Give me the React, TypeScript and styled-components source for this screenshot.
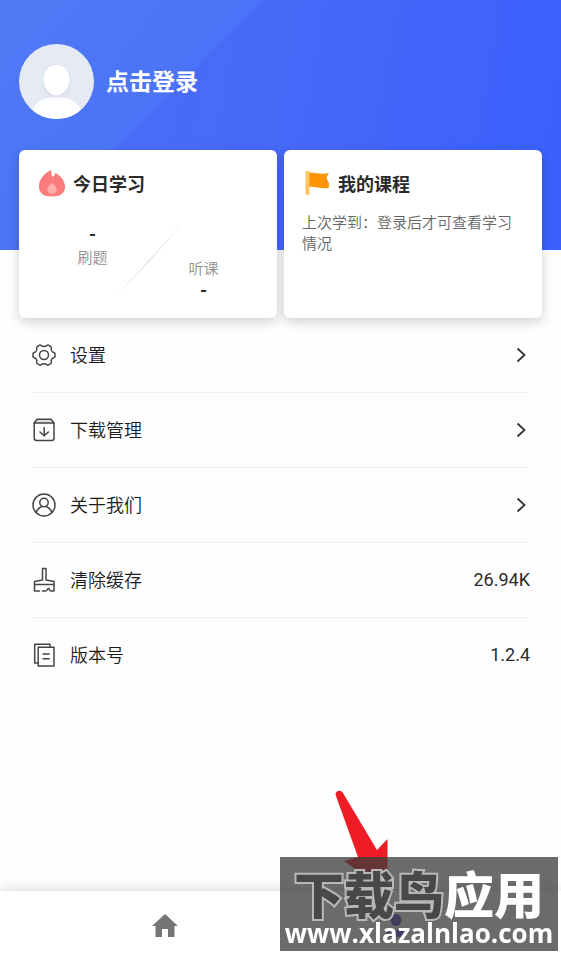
import React from "react";
import styled, { createGlobalStyle } from "styled-components";

const GlobalStyle = createGlobalStyle`
  * { box-sizing: border-box; }
  body {
    margin: 0;
    background: #fefefe;
    color: #2b2b2b;
    font-family: Roboto, "Noto Sans CJK SC", sans-serif;
  }
  button { font: inherit; color: inherit; background: none; border: 0; padding: 0; cursor: pointer; }
`;

const Page = styled.div`
  min-height: 100vh;
  display: flex;
  flex-direction: column;
`;

const Hero = styled.header`
  padding: 44px 19px 131px;
  background:
    linear-gradient(135deg, rgba(80, 124, 244, 0.85) 0, rgba(76, 118, 247, 0.75) 185px, transparent 187px),
    linear-gradient(100deg, #4c70f6 0%, #476af8 45%, #3e62fb 85%, #3a5ffd 100%);
`;

const LoginButton = styled.button`
  display: flex;
  align-items: center;
  gap: 12px;
`;

const LoginText = styled.span`
  padding-top: 2px;
  font-size: 23px;
  line-height: 32px;
  font-weight: 700;
  color: #fff;
`;

const Cards = styled.section`
  display: grid;
  grid-template-columns: 1fr 1fr;
  gap: 7px;
  margin-top: -100px;
  padding: 0 19px;
`;

const Card = styled.article`
  padding: 19px 18px 17px;
  border-radius: 6px;
  background: #fff;
  box-shadow: 0 4px 12px rgba(0, 0, 0, 0.18);
`;

const CardHead = styled.div`
  display: flex;
  align-items: center;
  gap: 8px;
`;

const CardTitle = styled.h2`
  margin: 0;
  padding-top: 2px;
  font-size: 18px;
  line-height: 28px;
  font-weight: 700;
`;

const CardText = styled.p`
  margin: 14px 0 0;
  font-size: 15px;
  line-height: 21px;
  font-weight: 350;
  color: #666;
`;

const Stats = styled.div`
  position: relative;
  display: grid;
  grid-template-columns: 1fr 1fr;
  margin-top: 25px;
`;

const Stat = styled.div<{ $low?: boolean }>`
  display: flex;
  flex-direction: ${(p) => (p.$low ? "column-reverse" : "column")};
  align-items: center;
  gap: ${(p) => (p.$low ? 0 : 3)}px;
  padding-top: ${(p) => (p.$low ? 35 : 0)}px;
  justify-content: flex-end;
  align-self: start;
`;

const StatValue = styled.strong`
  font-size: 18px;
  line-height: 21px;
`;

const StatLabel = styled.span`
  font-size: 15px;
  line-height: 21px;
  font-weight: 350;
  color: #909090;
`;

const Slash = styled.svg`
  position: absolute;
  left: 50%;
  top: 0;
  transform: translateX(-50%);
`;

const Menu = styled.nav`
  flex: 1;
  padding: 0 31px 0 30px;
`;

const MenuRow = styled.button`
  display: flex;
  align-items: center;
  width: 100%;
  height: 75px;
  border-bottom: 1px solid #efefef;
  font-size: 18px;
  text-align: left;
  &:last-child { border-bottom-color: transparent; }
`;

const RowLabel = styled.span`
  flex: 1;
  margin-left: 12px;
  padding-top: 2px;
  line-height: 26px;
  font-weight: 350;
  color: #1c1c1c;
`;

const RowValue = styled.span`
  line-height: 26px;
`;

const TabBar = styled.nav`
  position: sticky;
  bottom: 0;
  display: grid;
  grid-template-columns: 1fr 1fr;
  height: 65px;
  padding: 5px 49px 0;
  background: #fff;
  box-shadow: 0 -2px 12px rgba(0, 0, 0, 0.14);
`;

const Tab = styled.button`
  display: flex;
  align-items: center;
  justify-content: center;
`;

const Pointer = styled.svg`
  position: fixed;
  right: 171px;
  bottom: 55px;
  pointer-events: none;
`;

const Watermark = styled.aside`
  position: fixed;
  right: 3px;
  bottom: 5px;
  width: 278px;
  height: 94px;
  display: flex;
  flex-direction: column;
  align-items: center;
  padding-top: 8px;
  background: rgba(60, 60, 60, 0.76);
  pointer-events: none;
`;

const MarkName = styled.div`
  font-family: "Noto Sans CJK SC", sans-serif;
  font-size: 50px;
  line-height: 54px;
  font-weight: 900;
  color: #fff;
  white-space: nowrap;
`;

const MarkDark = styled.span`
  color: #484848;
  -webkit-text-stroke: 4px #b8b8b8;
  paint-order: stroke fill;
`;

const MarkUrl = styled.div`
  font-family: "Open Sans", sans-serif;
  font-size: 26px;
  line-height: 28px;
  font-weight: 700;
  color: #fff;
`;

const Avatar = () => (
  <svg width="75" height="75" viewBox="0 0 75 75" aria-hidden="true">
    <defs>
      <clipPath id="face"><circle cx="37.5" cy="37.5" r="37.5" /></clipPath>
      <filter id="soft" x="-30%" y="-30%" width="160%" height="160%">
        <feDropShadow dx="0" dy="2" stdDeviation="2.5" floodColor="#b9c8e6" floodOpacity="0.5" />
      </filter>
    </defs>
    <g clipPath="url(#face)">
      <rect width="75" height="75" fill="#e6ebf3" />
      <path d="M13 66C18 56 27 53 37.500 53S57 56 62 66V76H13Z" fill="#fff" />
      <path d="M37.500 21C45 21 50.500 27 50.500 35.500C50.500 44 44 51.500 37.500 51.500S24.500 44 24.500 35.500C24.500 27 30 21 37.500 21Z" fill="#fff" filter="url(#soft)" />
    </g>
  </svg>
);

const Flame = () => (
  <svg width="28" height="28" viewBox="0 0 28 28" aria-hidden="true">
    <path d="M14.500 0C14.200 3 14.300 5 15.500 7C17 6.300 17.800 4.800 18.200 3C24 5.500 28 11 28 17C28 23.500 23 26.500 15 26.500S2 23.500 2 16.500C2 8.500 8 2.500 14.500 0Z" fill="#fc7b7d" />
    <path d="M15 13C18 15.500 19.800 17.500 19.800 19.500A4.800 4.500 0 0 1 10.200 19.500C10.200 17 12.500 15 15 13Z" fill="#ffadad" />
  </svg>
);

const Flag = () => (
  <svg width="28" height="28" viewBox="0 0 28 28" aria-hidden="true">
    <path d="M7 2.500C14 2 18 5 27 3C24 7 24.500 9 27 13C27 17 27 18 26 18C18 19 13 16 7 17Z" fill="#ff9506" />
    <rect x="3.500" y="1" width="4" height="24" rx="1" fill="#fdc661" />
  </svg>
);

const IconBox = ({ children }: { children: React.ReactNode }) => (
  <svg width="28" height="28" viewBox="0 0 28 28" fill="none" stroke="#444" strokeWidth="1.5" strokeLinejoin="round" strokeLinecap="round" aria-hidden="true">
    {children}
  </svg>
);

const Gear = () => (
  <IconBox>
    <path d="M9.500 4.200Q10.300 3.700 11 4.400C12.500 5.800 15.500 5.800 17 4.400Q17.700 3.700 18.500 4.200L20.800 5.500Q21.500 6 21.300 7C20.900 9.200 22.300 11.300 24.200 11.700Q25 12 25 12.800V15.400Q25 16.200 24.200 16.500C22.300 17 20.900 19 21.300 21.200Q21.500 22.200 20.800 22.600L18.500 23.900Q17.700 24.400 17 23.700C15.500 22.300 12.500 22.300 11 23.700Q10.300 24.400 9.500 23.900L7.200 22.600Q6.500 22.200 6.700 21.200C7.100 19 5.700 17 3.800 16.500Q3 16.200 3 15.400V12.800Q3 12 3.800 11.700C5.700 11.300 7.100 9.200 6.700 7Q6.500 6 7.200 5.500Z" />
    <circle cx="14" cy="14" r="4.500" />
  </IconBox>
);

const Download = () => (
  <IconBox>
    <path d="M4.200 7L7 3.200H21L24 7Z" fill="#ddd" />
    <path d="M4.200 7V22Q4.200 24.500 6.500 24.500H21.700Q24 24.500 24 22V7M14.200 11.500V19.500M10 16L14.200 19.800L18.400 16" />
  </IconBox>
);

const Person = () => (
  <IconBox>
    <circle cx="14" cy="14" r="11" />
    <circle cx="14" cy="11.500" r="4.200" />
    <path d="M6 21.500C7 18 9.500 16.500 12 15.500M22 21.500C21 18 18.500 16.500 16 15.500" />
  </IconBox>
);

const Brush = () => (
  <IconBox>
    <path d="M12.500 14V2.500H16V14L24 15.500V18.500H4.500V15.500ZM4.500 18.500V25H9.500M12.500 25H15.500C17.500 25 17 23 18.500 22.500C20 23 19 25 21 25H24V18.500" />
  </IconBox>
);

const Pages = () => (
  <IconBox>
    <path d="M8 22H4.700V3.200H20V6" />
    <path d="M8.200 6.200H24V25H8.200ZM13 13H19.200M13 17.800H19.200" />
  </IconBox>
);

const Chevron = () => (
  <svg width="18" height="18" viewBox="0 0 18 18" fill="none" stroke="#333" strokeWidth="1.800" aria-hidden="true">
    <path d="M5.500 2.500L12.500 9L5.500 15.500" />
  </svg>
);

const rows = [
  { label: "设置", icon: <Gear /> },
  { label: "下载管理", icon: <Download /> },
  { label: "关于我们", icon: <Person /> },
  { label: "清除缓存", icon: <Brush />, value: "26.94K" },
  { label: "版本号", icon: <Pages />, value: "1.2.4" },
];

export default function App() {
  return (
    <Page>
      <GlobalStyle />
      <Hero>
        <LoginButton>
          <Avatar />
          <LoginText>点击登录</LoginText>
        </LoginButton>
      </Hero>
      <Cards>
        <Card>
          <CardHead>
            <Flame />
            <CardTitle>今日学习</CardTitle>
          </CardHead>
          <Stats>
            <Slash width="72" height="76" viewBox="0 0 72 76" aria-hidden="true">
              <path d="M6 70L36 37L68 2L37 38Z" fill="#e4e4e4" stroke="#f2f2f2" strokeWidth="0.500" />
            </Slash>
            <Stat>
              <StatValue>-</StatValue>
              <StatLabel>刷题</StatLabel>
            </Stat>
            <Stat $low>
              <StatValue>-</StatValue>
              <StatLabel>听课</StatLabel>
            </Stat>
          </Stats>
        </Card>
        <Card>
          <CardHead>
            <Flag />
            <CardTitle>我的课程</CardTitle>
          </CardHead>
          <CardText>上次学到：登录后才可查看学习情况</CardText>
        </Card>
      </Cards>
      <Menu>
        {rows.map((row) => (
          <MenuRow key={row.label}>
            {row.icon}
            <RowLabel>{row.label}</RowLabel>
            {row.value ? <RowValue>{row.value}</RowValue> : <Chevron />}
          </MenuRow>
        ))}
      </Menu>
      <TabBar>
        <Tab aria-label="首页">
          <svg width="28" height="28" viewBox="0 0 28 28" fill="#757575" aria-hidden="true">
            <path d="M14 2L27 14H23.500V25H17V17H11V25H4.500V14H1Z" />
          </svg>
        </Tab>
        <Tab aria-label="我的">
          <svg width="28" height="28" viewBox="0 0 28 28" fill="#4c3fd0" aria-hidden="true">
            <ellipse cx="14" cy="8" rx="5.500" ry="6" />
            <path d="M8 16L14 18.500L20 16Q24 18 24 25H4Q4 18 8 16Z" />
          </svg>
        </Tab>
      </TabBar>
      <Pointer width="56" height="110" viewBox="0 0 56 110" fill="#ee1c24" aria-hidden="true">
        <path d="M2 5C0 1 6 -3 9 2L43 59L53.500 48V93L52 110L47 97L10 70L24 66Z" />
      </Pointer>
      <Watermark>
        <MarkName><MarkDark>下载鸟</MarkDark>应用</MarkName>
        <MarkUrl>www.xlazalnlao.com</MarkUrl>
      </Watermark>
    </Page>
  );
}
